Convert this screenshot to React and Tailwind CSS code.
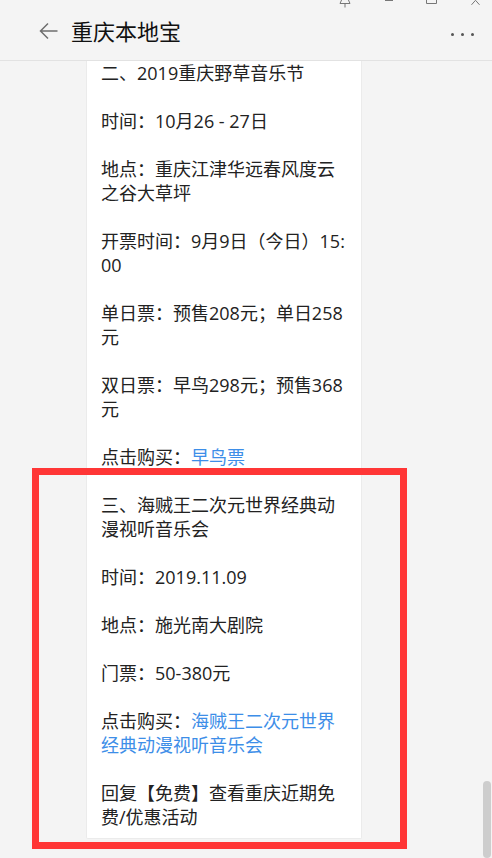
import React from "react";

const Line = ({ children }) => <span className="whitespace-nowrap">{children}</span>;

const Link = ({ children }) => <span className="text-[#3d8ee8]">{children}</span>;

export default function App() {
  const paras = [
    [["二、2019重庆野草音乐节"]],
    [["时间：10月26 - 27日"]],
    [["地点：重庆江津华远春风度云"], ["之谷大草坪"]],
    [["开票时间：9月9日（今日）15:"], ["00"]],
    [["单日票：预售208元；单日258"], ["元"]],
    [["双日票：早鸟298元；预售368"], ["元"]],
    [["点击购买：", <Link key="l">早鸟票</Link>]],
    [["三、海贼王二次元世界经典动"], ["漫视听音乐会"]],
    [["时间：2019.11.09"]],
    [["地点：施光南大剧院"]],
    [["门票：50-380元"]],
    [["点击购买：", <Link key="l">海贼王二次元世界</Link>], [<Link key="l2">经典动漫视听音乐会</Link>]],
    [["回复【免费】查看重庆近期免"], ["费/优惠活动"]],
  ];

  return (
    <div className="relative w-[492px] h-[858px] overflow-hidden bg-[#f4f4f4] font-['Microsoft_YaHei','Noto_Sans_CJK_SC',sans-serif]">
      {/* title bar remnants */}
      <svg className="absolute top-0 left-[330px]" width="162" height="8" viewBox="0 0 162 8" fill="none" stroke="#777" strokeWidth="1">
        <path d="M12 -1 L10 3.5 H20 L18 -1 M15 3.5 V7.5" />
        <path d="M55 0.5 H63" />
        <path d="M96.5 -6 V3.5 H106.5 V-6" />
        <path d="M141.5 4.8 L145.5 0.3 L149.5 4.8" />
      </svg>

      {/* header */}
      <header className="flex items-center h-[61px] border-b border-[#e2e2e2] pl-[39px] pr-[18px]">
        <svg width="19" height="18" viewBox="0 0 19 18" fill="none" stroke="#6e6e6e" strokeWidth="1.5" className="mt-[2px]">
          <path d="M18.5 9 H1.5 M9 1.5 L1.5 9 L9 16.5" />
        </svg>
        <h1 className="ml-[13px] text-[22px] leading-[28px] text-[#111] font-normal">重庆本地宝</h1>
        <div className="ml-auto flex items-center gap-[7px] mt-[8px]">
          <span className="w-[3px] h-[3px] rounded-full bg-[#555]" />
          <span className="w-[3px] h-[3px] rounded-full bg-[#555]" />
          <span className="w-[3px] h-[3px] rounded-full bg-[#555]" />
        </div>
      </header>

      {/* content */}
      <main className="pl-[86px]">
        <article className="w-[276px] bg-white border border-t-0 border-[#ebebeb] rounded-b-[2px] pl-[14px] pr-[12px] pb-[9px] text-[18px] leading-[24px] text-[#222] font-['Open_Sans','Noto_Sans_CJK_SC',sans-serif]">
          {paras.map((lines, i) => (
            <p key={i} className={i === paras.length - 1 ? "" : "mb-[24px]"}>
              {lines.map((parts, j) => (
                <React.Fragment key={j}>
                  {j > 0 && <br />}
                  <Line>{parts}</Line>
                </React.Fragment>
              ))}
            </p>
          ))}
        </article>
      </main>

      {/* red annotation box */}
      <div className="absolute left-[32px] top-[468px] w-[375px] h-[381px] border-[7px] border-[#ff3636]" />

      {/* scrollbar */}
      <div className="absolute left-[483px] top-[781px] w-[8px] h-[77px] rounded-full bg-[#cdcdcd]" />
    </div>
  );
}
